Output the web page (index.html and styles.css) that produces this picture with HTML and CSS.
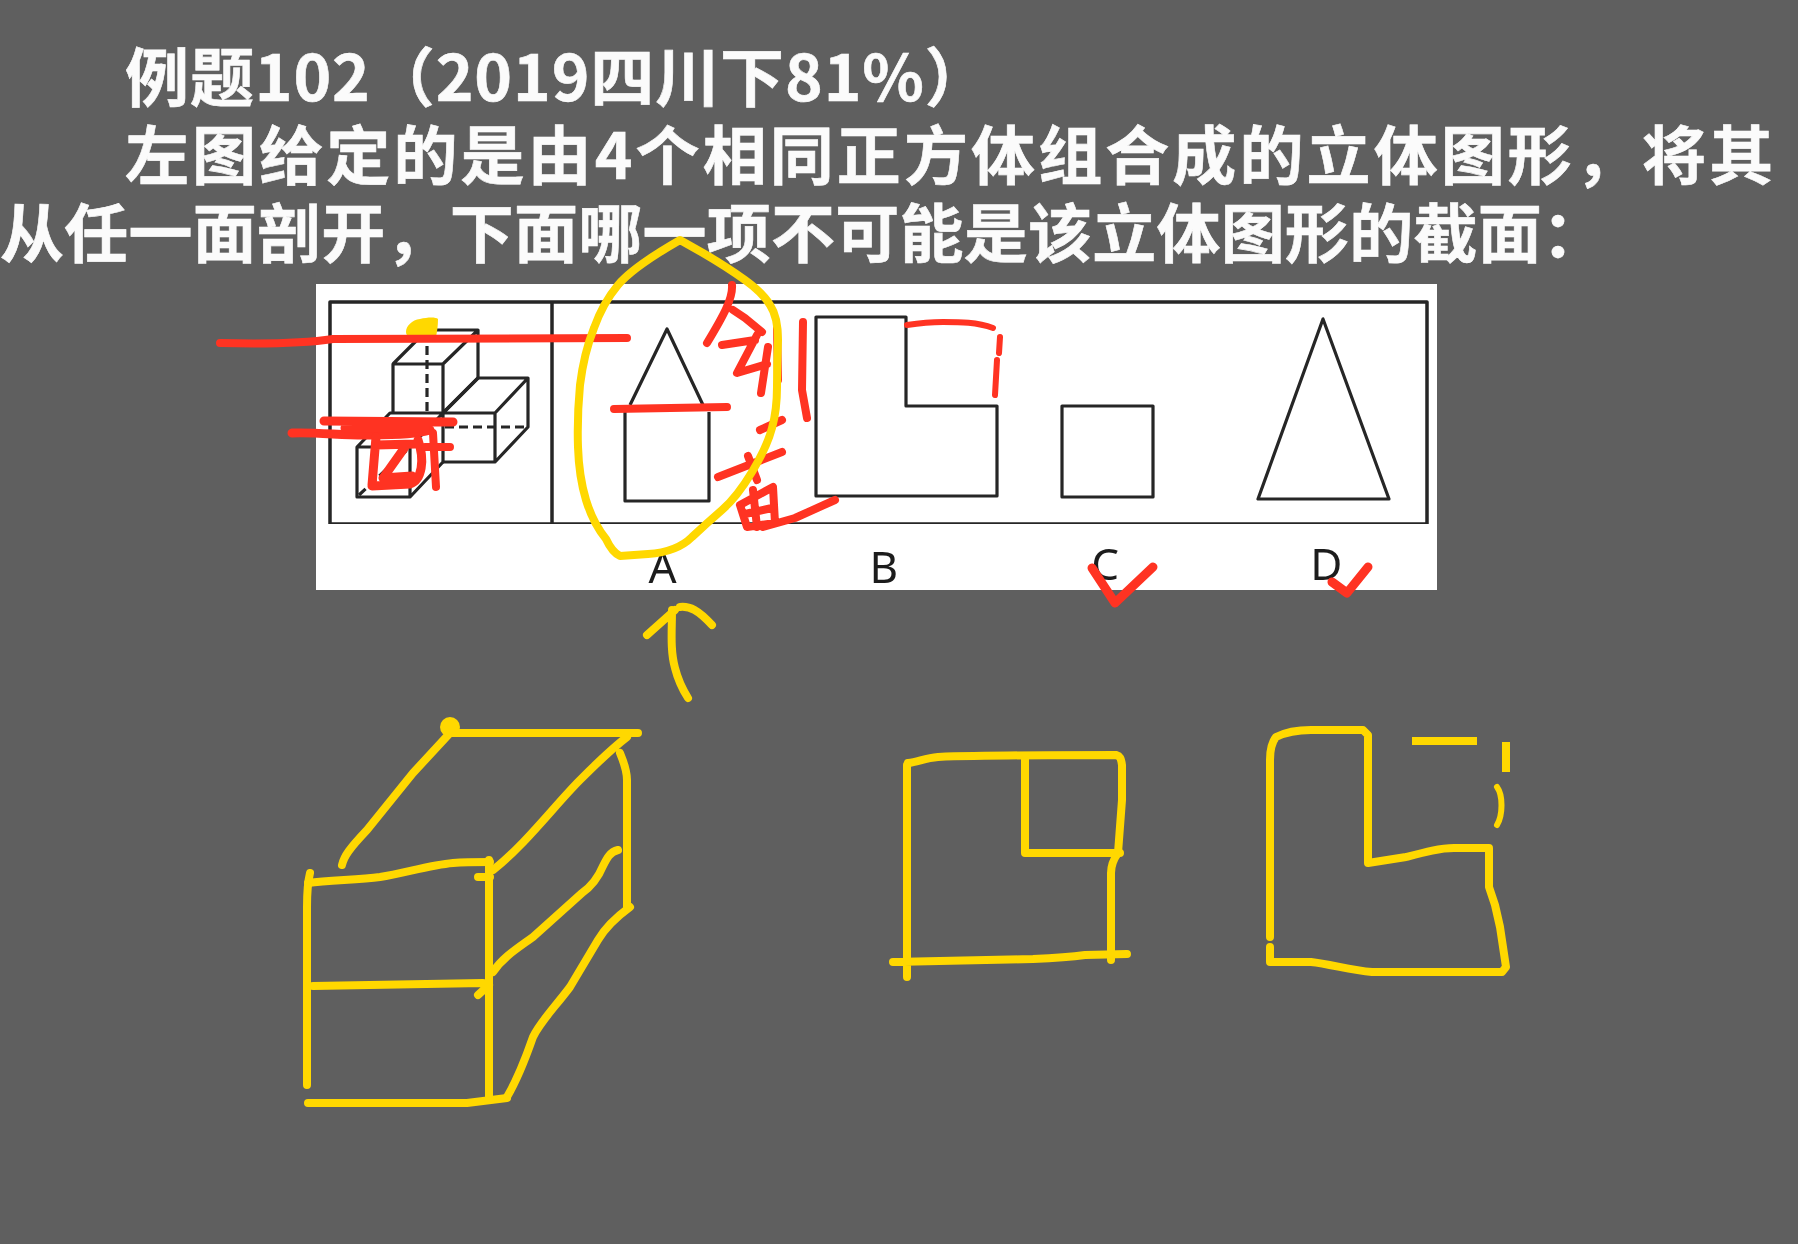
FILE: index.html
```html
<!DOCTYPE html>
<html lang="zh-CN">
<head>
<meta charset="utf-8">
<title>例题102</title>
<link rel="stylesheet" href="styles.css">
</head>
<body>
<main class="slide">
  <div class="question">
    <div class="line indent head">例题102（2019四川下81%）</div>
    <div class="line indent wide">左图给定的是由4个相同正方体组合成的立体图形，将其</div>
    <div class="line tail">从任一面剖开，下面哪一项不可能是该立体图形的截面：</div>
  </div>

  <section class="panel">
    <svg class="figure" viewBox="316 284 1121 240" width="1121" height="240" aria-hidden="true">
      <g class="ink">
        <rect x="330" y="302" width="1097" height="222"/>
        <path d="M552 302V524"/>
      </g>
      <g class="ink thin">
        <path d="M393 413V364H443V413M393 364L427 330H478L443 364M478 330V378L443 413"/>
        <path d="M443 413H495V462H443M443 413L478 378H528L495 413M528 378V427L495 462M495 413V462"/>
        <path d="M357 447H410V497H357ZM357 447L390 413H443L410 447M410 497L443 462V413M393 413H443"/>
        <path class="dash" d="M427 332V413M445 427H527M359 495L408 449"/>
      </g>
      <g class="ink thin">
        <path d="M625 412V501H709V412M630 405L667 329L703 405"/>
        <path d="M816 317H906V406H997V496H816Z"/>
        <path d="M1062 406H1153V497H1062Z"/>
        <path d="M1323 319L1258 499H1389Z"/>
      </g>
    </svg>
    <div class="labels">
      <span class="label">A</span>
      <span class="label">B</span>
      <span class="label raised">C</span>
      <span class="label raised">D</span>
    </div>
  </section>

  <svg class="annotations" viewBox="0 0 1798 1244" width="1798" height="1244" aria-hidden="true">
    <g class="pen yellow">
      <path class="blob" d="M406 332C406 326 412 320 420 319C428 317 436 317 438 319C438 326 437 332 436 337H410C407 336 406 334 406 332Z"/>
    </g>
    <g class="pen red">
      <path d="M220 343C260 344 300 344 333 339L627 338"/>
      <path class="heavy" d="M292 433C320 432 345 436 372 435C395 435 420 433 430 430"/>
      <path class="heavy" d="M324 421L453 422M345 428L425 428"/>
      <path class="heavy" d="M376 437L372 485M376 445L415 444M418 440C425 460 422 480 410 484L372 486M405 447L383 478L412 476"/>
      <path d="M433 433L436 487M425 447L450 447"/>
      <path d="M614 409L727 407"/>
      <path d="M732 285C733 298 724 315 707 343M733 310L745 318L762 332M722 345L755 340M757 335L737 373L767 364M768 347L761 393M777 328L778 380M803 322L802 390L807 418M760 430L782 420"/>
      <path d="M718 477L782 452M748 456L757 480M740 505L773 487L775 523L747 527L740 505M753 490L757 527M745 514L772 508M763 527L795 518L835 500"/>
      <path class="fine" d="M907 325C920 323 930 322 943 322C960 322 977 322 993 328M1000 337L999 353M997 360L995 395"/>
      <path class="heavy" d="M1092 568L1115 603L1153 567"/>
      <path class="heavy" d="M1332 582L1347 593L1368 567"/>
    </g>
    <g class="pen yellow">
      <path d="M703 253Q727 267 745 280Q763 293 770 305Q778 317 778 340Q777 363 777 387Q777 410 772 428Q767 447 752 472Q737 497 722 510Q707 523 692 537Q677 552 648 554L620 556Q612 552 606 539Q593 523 586 500Q579 477 578 447Q577 417 580 385Q584 353 594 328Q603 303 618 285Q633 267 680 240Z"/>
      <path d="M672 610C672 630 670 650 675 668C678 680 683 690 688 698M647 635L675 610M680 607C690 606 698 610 712 625"/>

      <path d="M342 865C344 856 350 848 367 830L413 773L450 733"/>
      <circle class="blob" cx="450" cy="727" r="10"/>
      <path d="M450 733H638M493 870C525 845 555 805 580 780C595 765 610 750 627 737M620 753C625 765 627 772 627 780V907"/>
      <path d="M618 850C610 852 607 858 603 866C598 878 592 886 582 893L533 937C518 948 503 957 493 972"/>
      <path d="M630 907C615 918 605 928 598 940L570 987C555 1007 540 1022 533 1037C525 1060 517 1080 507 1097"/>
      <path d="M308 883C330 880 358 880 380 877C405 873 430 865 453 863C465 862 478 862 490 862"/>
      <path d="M310 873C307 885 307 895 307 907V1085M489 860V1097M313 986L483 983M308 1103H467L507 1098M478 877H490M478 995L489 985"/>

      <path d="M908 763C918 762 925 758 938 757C990 755 1060 755 1116 755C1120 756 1121 758 1122 765C1122 780 1122 790 1122 800L1118 853C1113 860 1111 866 1111 873V960"/>
      <path d="M907 765V977M1025 757V853H1120M893 962L1033 959C1055 958 1070 957 1085 955L1127 954"/>

      <path d="M1270 937V760C1270 748 1272 742 1276 737C1288 731 1300 730 1311 730H1363L1368 735V863L1406 857C1425 852 1440 848 1454 848H1489V887L1495 905L1500 927L1506 967L1502 972H1372C1350 970 1330 964 1311 962H1270V947"/>
      <path class="square" d="M1412 741H1477M1506 742V772"/>
      <path class="fine" d="M1497 787C1503 795 1503 815 1497 825"/>
    </g>
  </svg>
</main>
</body>
</html>
```

FILE: styles.css
```css
* {
  box-sizing: border-box;
}

html,
body {
  margin: 0;
  padding: 0;
  background: #5f5f5f;
}

.slide {
  position: relative;
  width: 1798px;
  height: 1244px;
  padding-top: 34px;
  overflow: hidden;
  filter: blur(0.7px);
}

.question {
  color: #fbfbfb;
  font-family: "Noto Sans CJK SC", "Noto Sans", sans-serif;
  font-size: 64px;
  font-weight: 700;
  line-height: 78px;
  white-space: nowrap;
  -webkit-text-stroke: 0.6px #fbfbfb;
}

.indent {
  padding-left: 125px;
}

.head {
  letter-spacing: 0.9px;
}

.wide {
  letter-spacing: 3.1px;
}

.tail {
  letter-spacing: 0.25px;
}

.panel {
  width: 1121px;
  height: 306px;
  margin: 16px 0 0 316px;
  background: #fff;
}

.figure {
  display: block;
}

.ink {
  fill: none;
  stroke: #262626;
  stroke-width: 3.5;
  stroke-linejoin: round;
}

.ink.thin {
  stroke-width: 3.2;
}

.dash {
  stroke-dasharray: 9 5;
}

.labels {
  display: grid;
  grid-template-columns: repeat(4, 1fr);
  margin-left: 236px;
  height: 66px;
}

.label {
  padding-top: 18px;
  color: #1c1c1c;
  font-family: "Noto Sans", "Liberation Sans", sans-serif;
  font-size: 44px;
  line-height: 48px;
  text-align: center;
}

.label.raised {
  padding-top: 15px;
}

.annotations {
  position: absolute;
  top: 0;
  left: 0;
}

.pen {
  fill: none;
  stroke-linecap: round;
  stroke-linejoin: round;
  stroke-width: 8;
}

.pen .fine {
  stroke-width: 6;
}

.pen .heavy {
  stroke-width: 9;
}

.pen .square {
  stroke-linecap: butt;
}

.red {
  stroke: #ff3322;
}

.yellow {
  stroke: #ffd800;
}

.pen .blob {
  fill: #ffd800;
  stroke: none;
}
```
